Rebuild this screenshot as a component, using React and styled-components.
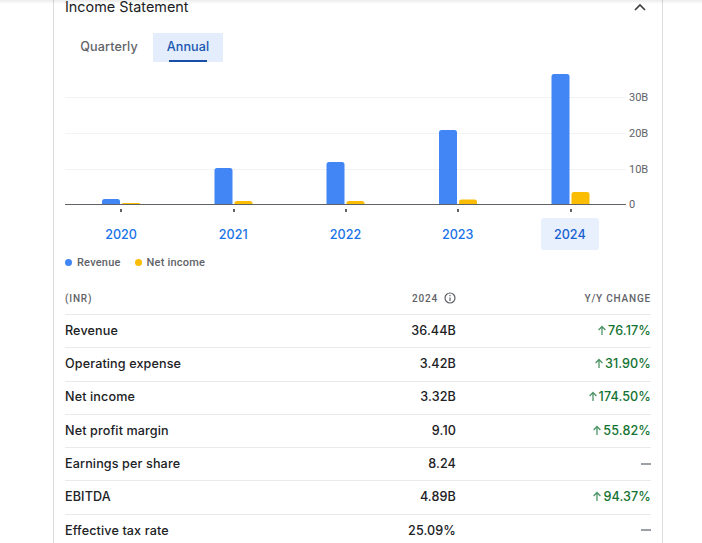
import styled, { createGlobalStyle } from "styled-components";

const GlobalStyle = createGlobalStyle`
  html, body {
    margin: 0;
    padding: 0;
    height: 543px;
    overflow: hidden;
    background: #fff;
    font-family: "Inter", "Roboto", sans-serif;
  }
`;

const TopShadow = styled.div`
  position: absolute;
  top: 0;
  left: 0;
  right: 0;
  height: 4px;
  background: linear-gradient(rgba(0, 0, 0, 0.08), rgba(0, 0, 0, 0));
`;

const Card = styled.section`
  width: 610px;
  height: 543px;
  box-sizing: border-box;
  margin-left: 53px;
  padding: 0 11px;
  border-left: 1px solid #dadce0;
  border-right: 1px solid #dadce0;
  overflow: hidden;
`;

const Header = styled.header`
  display: flex;
  justify-content: space-between;
  align-items: center;
  height: 14px;
  padding-right: 5px;
`;

const Title = styled.h2`
  margin: 0;
  font-size: 14.4px;
  font-weight: 400;
  color: #202124;
  line-height: 14px;
`;

const Tabs = styled.div`
  display: flex;
  margin-top: 19px;
`;

const Tab = styled.div`
  width: ${(p) => p.$w}px;
  height: 29px;
  box-sizing: border-box;
  padding-bottom: 3px;
  display: flex;
  justify-content: center;
  align-items: center;
  position: relative;
  font-size: 12.6px;
  font-weight: 500;
  letter-spacing: 0.1px;
  color: ${(p) => (p.$active ? "#1a56b0" : "#5f6368")};
  background: ${(p) => (p.$active ? "#e3edfb" : "transparent")};

  ${(p) =>
    p.$active &&
    `&::after {
      content: "";
      position: absolute;
      bottom: 0;
      left: 16px;
      right: 16px;
      height: 2px;
      background: #174ea6;
    }`}
`;

const ChartBox = styled.div`
  height: 156px;
`;

const Years = styled.div`
  display: grid;
  grid-template-columns: repeat(5, 112.2px);
`;

const YearCell = styled.div`
  display: flex;
  justify-content: center;
`;

const Year = styled.div`
  width: 58px;
  height: 32px;
  display: flex;
  align-items: center;
  justify-content: center;
  border-radius: 3px;
  font-size: 12.6px;
  font-weight: 500;
  color: ${(p) => (p.$active ? "#1a62cf" : "#1a73e8")};
  background: ${(p) => (p.$active ? "#e8f0fe" : "transparent")};
`;

const Legend = styled.div`
  display: flex;
  align-items: center;
  gap: 14px;
  margin-top: 5px;
  height: 14px;
  font-family: "Roboto", sans-serif;
  font-size: 11px;
  font-weight: 500;
  letter-spacing: 0.2px;
  color: #5f6368;
`;

const LegendItem = styled.span`
  display: flex;
  align-items: center;
  gap: 5px;

  &::before {
    content: "";
    width: 7px;
    height: 7px;
    margin-top: 1px;
    border-radius: 50%;
    background: ${(p) => p.$color};
  }
`;

const Table = styled.div`
  width: 586px;
  margin-top: 13px;
`;

const Row = styled.div`
  display: grid;
  grid-template-columns: 1fr 106px 195px;
  align-items: center;
  height: 33.3px;
  box-sizing: border-box;
  padding-bottom: 1.5px;
  border-bottom: 1px solid #e8eaed;
  font-size: 12.6px;
  font-weight: 500;
  letter-spacing: 0.12px;
  color: #202124;
`;

const HeadRow = styled(Row)`
  height: 33px;
  padding-bottom: 0;
  font-family: "Roboto", sans-serif;
  font-size: 10px;
  letter-spacing: 0.8px;
  color: #5f6368;
`;

const Value = styled.div`
  display: flex;
  justify-content: flex-end;
  align-items: center;
  gap: 6px;
`;

const Change = styled.div`
  display: flex;
  justify-content: flex-end;
  align-items: center;
  gap: 1px;
  color: ${(p) => (p.$muted ? "#5f6368" : "#137333")};
`;

const Dash = styled.span`
  width: 10px;
  height: 2px;
  background: #9aa0a6;
`;

const bars = [
  { x: 102, rev: 199, net: 203 },
  { x: 214.5, rev: 168, net: 201 },
  { x: 326.5, rev: 162, net: 201 },
  { x: 439, rev: 130, net: 199.5 },
  { x: 551.5, rev: 74, net: 192 },
];

const rows = [
  ["Revenue", "36.44B", "76.17%"],
  ["Operating expense", "3.42B", "31.90%"],
  ["Net income", "3.32B", "174.50%"],
  ["Net profit margin", "9.10", "55.82%"],
  ["Earnings per share", "8.24", null],
  ["EBITDA", "4.89B", "94.37%"],
  ["Effective tax rate", "25.09%", null],
];

function Bar({ x, top, color, base }) {
  const w = 18;
  const h = base - top;
  const r = Math.min(2.5, h);
  return (
    <path
      d={`M${x} ${base}V${top + r}Q${x} ${top} ${x + r} ${top}H${x + w - r}Q${x + w} ${top} ${x + w} ${top + r}V${base}Z`}
      fill={color}
    />
  );
}

// offsets in the svg are page x minus 65, y minus 62
function Chart() {
  const base = 142;
  const labels = [
    ["30B", 35],
    ["20B", 71],
    ["10B", 107],
    ["0", 142],
  ];
  return (
    <svg width="586" height="155" viewBox="0 0 586 155">
      {[35, 71, 107].map((y) => (
        <line key={y} x1="0" x2="561" y1={y + 0.5} y2={y + 0.5} stroke="#f1f3f4" />
      ))}
      {bars.map((b) => (
        <g key={b.x}>
          <Bar x={b.x - 65} top={b.rev - 62} color="#4285f4" base={base} />
          <Bar x={b.x - 65 + 20} top={b.net - 62} color="#fbbc04" base={base} />
          <rect x={Math.round(b.x - 65 + 18)} y="147" width="2" height="3" fill="#5f6368" />
        </g>
      ))}
      <line x1="0" x2="561" y1="142.5" y2="142.5" stroke="#5f6368" strokeWidth="1.2" />
      {labels.map(([t, y]) => (
        <text
          key={t}
          x="564"
          y={y + 4}
          fontSize="11"
          fill="#5f6368"
          fontFamily="Roboto, sans-serif"
        >
          {t}
        </text>
      ))}
    </svg>
  );
}

function UpArrow() {
  return (
    <svg width="10" height="11" viewBox="0 0 10 11" fill="none" stroke="#4f9468" strokeWidth="1.3">
      <path d="M5 10V1.8M1.6 5L5 1.5 8.4 5" />
    </svg>
  );
}

function InfoIcon() {
  return (
    <svg width="12" height="12" viewBox="0 0 12 12" fill="none" stroke="#5f6368" strokeWidth="1.2">
      <circle cx="6" cy="6" r="5" />
      <path d="M6 5.4V9M6 3V4.2" />
    </svg>
  );
}

export default function App() {
  return (
    <>
      <GlobalStyle />
      <Card>
        <Header>
          <Title>Income Statement</Title>
          <svg width="12" height="8" viewBox="0 0 12 8" fill="none" stroke="#3c4043" strokeWidth="1.7">
            <path d="M1 7L6 2L11 7" />
          </svg>
        </Header>
        <Tabs>
          <Tab $w={88}>Quarterly</Tab>
          <Tab $w={70} $active>
            Annual
          </Tab>
        </Tabs>
        <ChartBox>
          <Chart />
        </ChartBox>
        <Years>
          {[2020, 2021, 2022, 2023, 2024].map((y) => (
            <YearCell key={y}>
              <Year $active={y === 2024}>{y}</Year>
            </YearCell>
          ))}
        </Years>
        <Legend>
          <LegendItem $color="#4285f4">Revenue</LegendItem>
          <LegendItem $color="#fbbc04">Net income</LegendItem>
        </Legend>
        <Table>
          <HeadRow>
            <div>(INR)</div>
            <Value>
              2024 <InfoIcon />
            </Value>
            <Change $muted>Y/Y CHANGE</Change>
          </HeadRow>
          {rows.map(([name, val, change]) => (
            <Row key={name}>
              <div>{name}</div>
              <Value>{val}</Value>
              <Change>
                {change ? (
                  <>
                    <UpArrow />
                    {change}
                  </>
                ) : (
                  <Dash />
                )}
              </Change>
            </Row>
          ))}
        </Table>
      </Card>
      <TopShadow />
    </>
  );
}
